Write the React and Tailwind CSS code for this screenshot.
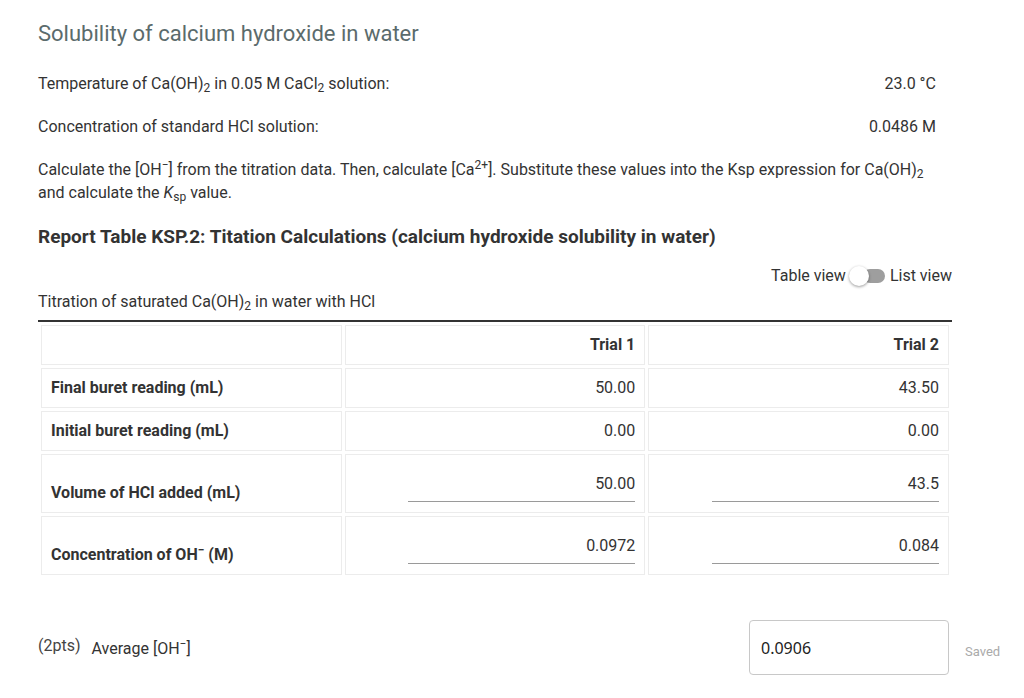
import React from "react";

const font = { fontFamily: "Roboto, 'Liberation Sans', sans-serif" };

function Cell({ children, className = "" }) {
  return (
    <td className={"border border-[#ececec] px-[9px] " + className}>{children}</td>
  );
}

function Underlined({ value }) {
  return (
    <div className="flex justify-end">
      <div className="w-[227px] border-b border-[#9a9a9a] text-right pb-[7px] leading-[20px]">{value}</div>
    </div>
  );
}

export default function App() {
  return (
    <div className="min-h-[698px] bg-white text-[#333] text-[16px]" style={font}>
      <div className="w-[914px] ml-[38px]">
        <div className="pt-[20px] text-[22px] leading-[28px] text-[#5b6b6c]">
          Solubility of calcium hydroxide in water
        </div>
        <div className="mt-[25px] flex justify-between leading-[22px] pr-[16px]">
          <span>
            Temperature of Ca(OH)<sub>2</sub> in 0.05 M CaCl<sub>2</sub> solution:
          </span>
          <span>23.0 °C</span>
        </div>
        <div className="mt-[21px] flex justify-between leading-[22px] pr-[16px]">
          <span>Concentration of standard HCl solution:</span>
          <span>0.0486 M</span>
        </div>
        <p className="mt-[20px] leading-[23px]">
          Calculate the [OH<sup>−</sup>] from the titration data. Then, calculate [Ca<sup>2+</sup>]. Substitute these values into the Ksp expression for Ca(OH)<sub>2</sub>
          <br />
          and calculate the <i>K</i>
          <sub>sp</sub> value.
        </p>
        <div className="mt-[20px] text-[19px] font-bold leading-[26px] text-[#333]">
          Report Table KSP.2: Titation Calculations (calcium hydroxide solubility in water)
        </div>
        <div className="mt-[14px] h-[24px] flex items-center justify-end gap-[3px]">
          <span>Table view</span>
          <div className="relative w-[38px] h-[24px] flex items-center">
            <div className="absolute left-[14px] w-[22px] h-[14px] rounded-full bg-[#9e9e9e]" />
            <div className="absolute left-0 w-[20px] h-[20px] rounded-full bg-white shadow-[0_1px_3px_rgba(0,0,0,0.4)]" />
          </div>
          <span>List view</span>
        </div>
        <div className="mt-[3px] leading-[22px] pb-[7px] border-b-2 border-[#333]">
          Titration of saturated Ca(OH)<sub>2</sub> in water with HCl
        </div>
        <table className="w-full border-separate border-spacing-[3px] text-[16px]">
          <tbody>
            <tr className="h-[40px]">
              <Cell className="w-1/3" />
              <Cell className="w-1/3 text-right font-bold">Trial 1</Cell>
              <Cell className="w-1/3 text-right font-bold">Trial 2</Cell>
            </tr>
            <tr className="h-[40px]">
              <Cell className="font-bold">Final buret reading (mL)</Cell>
              <Cell className="text-right">50.00</Cell>
              <Cell className="text-right">43.50</Cell>
            </tr>
            <tr className="h-[40px]">
              <Cell className="font-bold">Initial buret reading (mL)</Cell>
              <Cell className="text-right">0.00</Cell>
              <Cell className="text-right">0.00</Cell>
            </tr>
            <tr className="h-[59px]">
              <Cell className="font-bold pt-[18px]">Volume of HCl added (mL)</Cell>
              <Cell className="pt-[9px]"><Underlined value="50.00" /></Cell>
              <Cell className="pt-[9px]"><Underlined value="43.5" /></Cell>
            </tr>
            <tr className="h-[59px]">
              <Cell className="font-bold pt-[18px]">
                Concentration of OH<sup>−</sup> (M)
              </Cell>
              <Cell className="pt-[9px]"><Underlined value="0.0972" /></Cell>
              <Cell className="pt-[9px]"><Underlined value="0.084" /></Cell>
            </tr>
          </tbody>
        </table>
        <div className="mt-[42px] flex items-center relative">
          <span className="text-[16px] text-[#444] mr-[11px] -mt-[3px]">(2pts)</span>
          <span className="text-[16px] text-[#333] pt-[2px]">
            Average [OH<sup>−</sup>]
          </span>
          <div
            className="ml-auto mr-[3px] w-[200px] h-[55px] rounded-[4px] border border-[#c8c8c8] flex items-center px-[11px] text-[16px] text-[#222]"
            style={{ fontFamily: "'Noto Sans', 'Open Sans', sans-serif" }}
          >
            0.0906
          </div>
          <span className="absolute left-[927px] top-[22px] text-[13px] text-[#aaa]">Saved</span>
        </div>
      </div>
    </div>
  );
}
